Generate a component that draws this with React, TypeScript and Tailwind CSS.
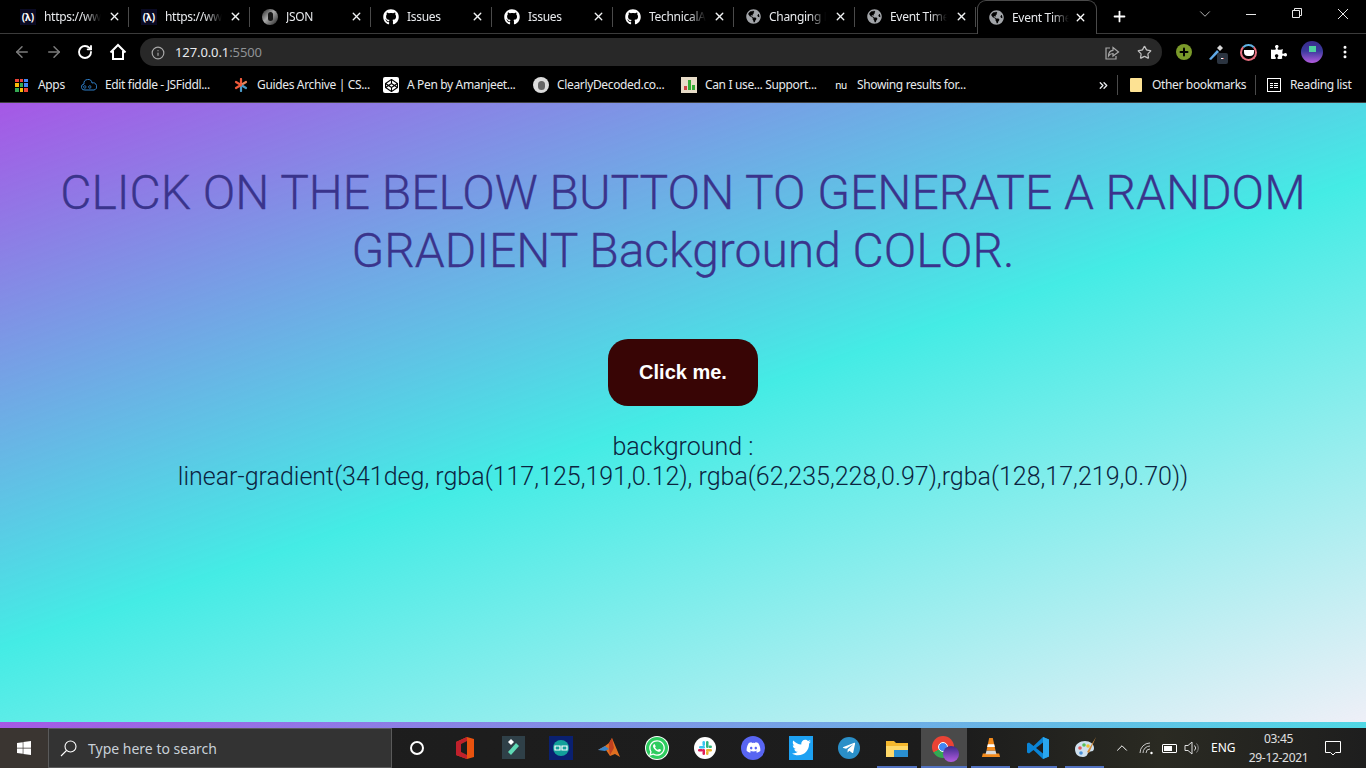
import { ArrowLeft, ArrowRight, ChevronDown, ChevronUp, Info, Plus, RotateCw, Star, X, MoreVertical, ChevronsRight } from 'lucide-react'
import { FaDiscord, FaGithub, FaGlobeAmericas, FaPuzzlePiece, FaTelegramPlane, FaTwitter, FaWhatsapp, FaWindows, FaCodepen } from 'react-icons/fa'
import type { ReactNode } from 'react'

const FreeCodeCamp = () => (
  <span className="flex h-4 w-4 items-center justify-center bg-[#0a0a23] text-[10px] font-bold text-white">
    <span className="leading-none">(λ)</span>
  </span>
)
const JsonLogo = () => (
  <span className="flex h-4 w-4 items-center justify-center rounded-full bg-[linear-gradient(135deg,#222,#aaa_45%,#222)]">
    <span className="h-[9px] w-[5px] rounded-full bg-[#161616]" />
  </span>
)
const Github = () => <FaGithub className="h-4 w-4 text-white" />
const Globe = () => <FaGlobeAmericas className="h-[15px] w-[15px] text-[#a2a5a9]" />

const tabs: { title: string; icon: ReactNode }[] = [
  { title: 'https://www.freecodecamp', icon: <FreeCodeCamp /> },
  { title: 'https://www.freecodecamp', icon: <FreeCodeCamp /> },
  { title: 'JSON', icon: <JsonLogo /> },
  { title: 'Issues', icon: <Github /> },
  { title: 'Issues', icon: <Github /> },
  { title: 'TechnicalAnalysis', icon: <Github /> },
  { title: 'Changing Background', icon: <Globe /> },
  { title: 'Event Timer', icon: <Globe /> },
]

function Tab({ title, icon }: { title: string; icon: ReactNode }) {
  return (
    <div className="flex h-[33px] w-[121px] shrink-0 items-center">
      <div className="flex h-5 w-full items-center border-r border-[#4a4a4a] pl-3 pr-[7px]">
        {icon}
        <span className="ml-2 w-[57px] overflow-hidden whitespace-nowrap pt-px text-[12px] tracking-[-0.3px] text-[#e8eaed] [mask-image:linear-gradient(90deg,#000_70%,transparent)]">
          {title}
        </span>
        <X className="ml-auto h-[13px] w-[13px] text-[#f1f3f4]" strokeWidth={2.5} />
      </div>
    </div>
  )
}

function Bookmark({ width, icon, label }: { width: string; icon: ReactNode; label: string }) {
  return (
    <div className={`flex shrink-0 items-center gap-2 ${width}`}>
      <span className="flex h-4 w-4 items-center justify-center">{icon}</span>
      <span className="whitespace-nowrap">{label}</span>
    </div>
  )
}

const AppsGrid = () => (
  <span className="grid h-[13px] w-[13px] grid-cols-3 gap-px">
    {['bg-[#ea4335]', 'bg-[#ea4335]', 'bg-[#4285f4]', 'bg-[#fbbc05]', 'bg-[#34a853]', 'bg-[#4285f4]', 'bg-[#34a853]', 'bg-[#fbbc05]', 'bg-[#ea4335]'].map((c, i) => (
      <span key={i} className={c} />
    ))}
  </span>
)

const Cell = ({ children, active, running, w = 'w-[48px]' }: { children: ReactNode; active?: boolean; running?: boolean; w?: string }) => (
  <div className={`relative flex h-10 shrink-0 items-center justify-center pb-px ${w} ${active ? 'bg-[#4a4a4a]' : ''}`}>
    {children}
    {running && <span className={`absolute bottom-0 h-[2px] bg-[#5272c0] ${active ? 'inset-x-0' : 'inset-x-[4px]'}`} />}
  </div>
)

export default function App() {
  return (
    <div className="flex h-screen w-full flex-col overflow-hidden bg-black font-['Noto_Sans',sans-serif]">
      {/* tab strip */}
      <div className="flex h-[34px] shrink-0 items-start border-b border-[#3b3b3b] pl-2">
        {tabs.map((tab, i) => (
          <Tab key={i} title={tab.title} icon={tab.icon} />
        ))}
        <div className="relative z-10 ml-px flex h-[34px] w-[120px] shrink-0 items-center rounded-t-[9px] border border-b-0 border-[#4a4a4a] bg-black pb-px pl-[11px] pr-[9px]">
          <Globe />
          <span className="ml-2 w-[57px] overflow-hidden whitespace-nowrap pt-px text-[12px] tracking-[-0.3px] text-[#e8eaed] [mask-image:linear-gradient(90deg,#000_70%,transparent)]">Event Timer</span>
          <X className="ml-auto h-[13px] w-[13px] text-white" strokeWidth={2.5} />
        </div>
        <div className="ml-[14px] flex h-[33px] items-center">
          <Plus className="h-[17px] w-[17px] text-white" strokeWidth={2.5} />
        </div>
        <div className="ml-auto flex h-[28px] items-center text-[#e8e8e8]">
          <ChevronDown className="h-[18px] w-[46px]" strokeWidth={1} />
          <svg viewBox="0 0 46 14" className="h-[14px] w-[46px]" fill="none" stroke="currentColor"><path d="M18 7.500h10" /></svg>
          <svg viewBox="0 0 46 14" className="h-[14px] w-[46px]" fill="none" stroke="currentColor"><path d="M18.500 3.500h7v7h-7zM20.500 3.500v-2h7v7h-2" /></svg>
          <svg viewBox="0 0 46 14" className="h-[14px] w-[46px]" fill="none" stroke="currentColor"><path d="M18 2l10 10M28 2 18 12" /></svg>
        </div>
      </div>

      {/* toolbar */}
      <div className="flex h-[36px] shrink-0 items-center text-white">
        <ArrowLeft className="ml-[13px] h-[18px] w-[18px] text-[#7c7c7c]" strokeWidth={2} />
        <ArrowRight className="ml-[14px] h-[18px] w-[18px] text-[#7c7c7c]" strokeWidth={2} />
        <RotateCw className="ml-[14px] h-[16px] w-[16px] text-white" strokeWidth={2.8} />
        <svg viewBox="0 0 18 18" className="ml-[16px] h-[18px] w-[18px]" fill="none" stroke="#fff" strokeWidth="2"><path d="M1.500 9.500 9 2l7.500 7.500M4 8v8h10V8" /></svg>
        <div className="ml-[13px] flex h-[28px] w-[1022px] items-center rounded-full bg-[#282828] pl-[11px] pr-[9px] pt-px">
          <Info className="h-[14px] w-[14px] text-[#a8a8a8]" />
          <span className="ml-[10px] text-[13px] tracking-[-0.1px] text-[#e8eaed]">
            127.0.0.1<span className="text-[#8f9295]">:5500</span>
          </span>
          <svg viewBox="0 0 16 16" className="ml-auto h-4 w-4" fill="none" stroke="#a8a8a8" strokeWidth="1.200"><path d="M6 3H2v11h10v-3" /><path d="M9 2.500 14.500 7 9 11V8.500C7 8.500 5.500 9.500 4.500 11c0-3.500 2-5.500 4.500-5.700z" /></svg>
          <Star className="ml-[17px] mr-[1px] h-[15px] w-[15px] text-[#c0c0c0]" strokeWidth={2} />
        </div>
        <span className="ml-[14px] flex h-4 w-4 items-center justify-center rounded-full bg-[#7a9a2a]">
          <Plus className="h-3 w-3 text-black" strokeWidth={4} />
        </span>
        <span className="relative ml-[16px] flex h-4 w-4 items-center justify-center">
          <svg viewBox="0 0 16 16" className="h-4 w-4"><path d="M1 15 9 6l2 2-8 8z" fill="#5fa8e6" /><path d="M9 4l3-3 3 3-3 3z" fill="#d8d8d8" /></svg>
          <span className="absolute -bottom-[4px] -right-[4px] flex h-[11px] w-[11px] items-center justify-center rounded-[2px] bg-[#2b3440]">
            <span className="h-px w-[3px] bg-[linear-gradient(90deg,#fff_50%,#e05a5a_50%)]" />
          </span>
        </span>
        <span className="ml-[16px] flex h-[17px] w-[17px] items-center justify-center rounded-full border-2 border-[#e87080] border-t-[#5fb4e6] bg-black">
          <span className="h-[7px] w-[10px] rounded-b-[4px] border-t border-black bg-white" />
        </span>
        <FaPuzzlePiece className="ml-[14px] h-4 w-4 text-white" />
        <span className="ml-[14px] flex h-[22px] w-[22px] items-start justify-center rounded-full bg-[linear-gradient(180deg,#3a2a8c,#3a3a9c_45%,#b45ce0)] pt-[5px]">
          <span className="h-[6px] w-[7px] bg-[#4fd0a0]" />
        </span>
        <MoreVertical className="ml-[14px] h-[16px] w-[16px] text-white" strokeWidth={2.5} />
      </div>

      {/* bookmarks bar */}
      <div className="flex h-[33px] shrink-0 items-center border-b border-[#3f3f3f] pb-[2px] pl-[15px] text-[12px] tracking-[-0.35px] text-[#e8eaed]">
        <div className="flex w-[66px] shrink-0 items-center gap-[10px]">
          <AppsGrid />
          <span>Apps</span>
        </div>
        <Bookmark width="w-[152px]" label="Edit fiddle - JSFiddl..." icon={<svg viewBox="0 0 16 12" className="h-3 w-4" fill="none" stroke="#2f7fc8" strokeWidth="1"><path d="M4 11a3 3 0 0 1-1-6 4 4 0 0 1 8-1 3.500 3.500 0 0 1 2 7z" /><path d="M5 8a1.200 1.200 0 1 1 0-.1zM10 8a1.200 1.200 0 1 1 0-.1z" /></svg>} />
        <Bookmark width="w-[150px]" label="Guides Archive | CS..." icon={<svg viewBox="0 0 14 14" className="h-[14px] w-[14px]" strokeWidth="2.200" strokeLinecap="round"><path d="M7 7V1" stroke="#ef5a3a" /><path d="M7 7l5-3" stroke="#e8845a" /><path d="M7 7l5 3" stroke="#4a9ac8" /><path d="M7 7v6" stroke="#4a9ac8" /><path d="M7 7l-5 3" stroke="#ef5a3a" /><path d="M7 7 2 4" stroke="#ef5a3a" /></svg>} />
        <Bookmark width="w-[150px]" label="A Pen by Amanjeet..." icon={<span className="flex h-4 w-4 items-center justify-center rounded-[2px] bg-white"><FaCodepen className="h-[13px] w-[13px] text-black" /></span>} />
        <Bookmark width="w-[148px]" label="ClearlyDecoded.co..." icon={<span className="flex h-4 w-4 items-center justify-center rounded-full bg-[#dcdcdc]"><span className="h-[9px] w-[7px] rounded-full bg-[#666]" /></span>} />
        <Bookmark width="w-[152px]" label="Can I use... Support..." icon={<span className="flex h-4 w-4 items-end justify-center gap-px bg-[#e8dcc8] pb-[3px]"><span className="h-[4px] w-[3px] bg-[#c44]" /><span className="h-[10px] w-[3px] bg-[#3a3]" /><span className="h-[5px] w-[3px] bg-[#3a3]" /></span>} />
        <Bookmark width="w-[264px]" label="Showing results for..." icon={<span className="text-[10px] leading-none text-white">nu</span>} />
        <ChevronsRight className="h-[13px] w-[13px] text-[#e8eaed]" strokeWidth={2.5} />
        <span className="ml-[7px] h-5 w-px bg-[#4a4a4a]" />
        <span className="ml-[12px] block h-[14px] w-[12px] rounded-[1px] bg-[#fde293]" />
        <span className="ml-[10px] w-[103px] whitespace-nowrap">Other bookmarks</span>
        <span className="h-5 w-px bg-[#4a4a4a]" />
        <span className="ml-[11px] grid h-[14px] w-[14px] grid-cols-[3px_1fr] content-center gap-x-px gap-y-px border border-white p-[2px]">
          {[0, 1, 2, 3, 4, 5].map((n) => (
            <span key={n} className="h-px bg-white" />
          ))}
        </span>
        <span className="ml-[9px] whitespace-nowrap">Reading list</span>
      </div>

      {/* page */}
      <main className="flex min-h-0 flex-1 flex-col items-center bg-white bg-[linear-gradient(341deg,rgba(117,125,191,0.12),rgba(62,235,228,0.97),rgba(128,17,219,0.70))] bg-[length:100%_619px] font-['Roboto',sans-serif]">
        <h1 className="mt-[61px] w-full px-[60px] text-center text-[48px] font-light leading-[58px] text-[#3a348c] [-webkit-text-stroke:0.3px_#3a348c]">
          CLICK ON THE BELOW BUTTON TO GENERATE A RANDOM GRADIENT Background COLOR.
        </h1>
        <button className="mt-[59px] flex h-[67px] w-[150px] items-center justify-center rounded-[20px] bg-[#380505] pb-[2px] font-['Liberation_Sans',sans-serif] text-[20px] font-bold text-white">
          Click me.
        </button>
        <div className="mt-[26px] text-center text-[25px] font-light leading-[30px] text-[#0c2440]">
          <p>background :</p>
          <p>linear-gradient(341deg, rgba(117,125,191,0.12), rgba(62,235,228,0.97),rgba(128,17,219,0.70))</p>
        </div>
      </main>

      {/* taskbar */}
      <div className="flex h-10 shrink-0 items-center bg-[linear-gradient(90deg,#1e1e1e,#1c1c1c_70%,#2a2a22_85%,#1e1e1e)] text-white">
        <div className="flex h-10 w-12 shrink-0 items-center justify-center bg-[#3a3531]">
          <FaWindows className="h-4 w-4 text-white" />
        </div>
        <div className="flex h-10 w-[344px] shrink-0 items-center border border-[#5a5a5a] bg-[#333333] pl-[11px] text-[14px] text-[#c8d0d8]">
          <svg viewBox="0 0 17 17" className="h-[17px] w-[17px]" fill="none" stroke="#fff" strokeWidth="1.100"><circle cx="10.500" cy="6.500" r="5.500" /><path d="M6.500 10.500 1 16" /></svg>
          <span className="ml-[11px]">Type here to search</span>
        </div>
        <Cell w="w-[49px]"><span className="h-[14px] w-[14px] rounded-full border-2 border-white" /></Cell>
        <Cell><svg viewBox="0 0 18 22" className="h-[22px] w-[18px]"><path d="M0 5 11 0l7 2v18l-7 2-11-4z" fill="#e8520e" /><path d="M0 5 11 0v4L5 7v8l6 3v4L0 18z" fill="#c0202c" /><path d="M5 7l6-3v14l-6-3z" fill="#1c1c1c" /></svg></Cell>
        <Cell><span className="relative flex h-[23px] w-[23px] items-center justify-center bg-[#2f4048]"><svg viewBox="0 0 23 23" className="h-[23px] w-[23px]"><path d="M6 6l3-3 3 3-3 3z" fill="#fff" /><path d="M14 7l3 3-8 9-3-3z" fill="#5fd9b5" /></svg></span></Cell>
        <Cell><span className="flex h-6 w-6 items-center justify-center bg-[#0a2070]"><svg viewBox="0 0 16 16" className="h-4 w-4"><circle cx="8" cy="8" r="8" fill="#12a09a" /><path d="M2 6h5v4H2zM9 6h5v4H9z" fill="none" stroke="#fff" strokeWidth="1.200" /></svg></span></Cell>
        <Cell><svg viewBox="0 0 24 22" className="h-[22px] w-6"><path d="M1 13l7-4 4-3 3-5 8 19-5-3-5 2-4-6z" fill="#e07020" /><path d="M1 13l7-4 4 3-4 2z" fill="#3a85c8" /><path d="M12 6l3-5 2 10-4 7-1-6z" fill="#c04020" /></svg></Cell>
        <Cell><span className="flex h-[22px] w-[22px] items-center justify-center rounded-full bg-[#2ecc5f] ring-1 ring-white"><FaWhatsapp className="h-[18px] w-[18px] text-white" /></span></Cell>
        <Cell><svg viewBox="0 0 22 22" className="h-[22px] w-[22px]"><circle cx="11" cy="11" r="11" fill="#fff" /><rect x="5" y="9" width="6" height="2.500" rx="1.200" fill="#36c5f0" /><rect x="8.500" y="4" width="2.500" height="5" rx="1.200" fill="#36c5f0" /><rect x="12" y="4" width="2.500" height="7" rx="1.200" fill="#2eb67d" /><rect x="14.500" y="8.500" width="3.500" height="2.500" rx="1.200" fill="#2eb67d" /><rect x="12" y="12" width="6" height="2.500" rx="1.200" fill="#ecb22e" /><rect x="12" y="14" width="2.500" height="4" rx="1.200" fill="#ecb22e" /><rect x="8.500" y="12" width="2.500" height="6" rx="1.200" fill="#e01e5a" /><rect x="4" y="12" width="5" height="2.500" rx="1.200" fill="#e01e5a" /></svg></Cell>
        <Cell><span className="flex h-6 w-6 items-center justify-center rounded-full bg-[#5865f2]"><FaDiscord className="h-[15px] w-[15px] text-white" /></span></Cell>
        <Cell><span className="flex h-6 w-6 items-center justify-center bg-[#1da1f2]"><FaTwitter className="h-[19px] w-[19px] text-white" /></span></Cell>
        <Cell><span className="flex h-[22px] w-[22px] items-center justify-center rounded-full bg-[#2a8fc8]"><FaTelegramPlane className="h-[14px] w-[14px] text-white" /></span></Cell>
        <Cell running><svg viewBox="0 0 24 20" className="h-5 w-6"><path d="M1 3h8l2 2h12v14H1z" fill="#f5b82e" /><path d="M1 8h22v11H1z" fill="#ffd969" /><rect x="9" y="12" width="14" height="7" fill="#2a8fd0" /></svg></Cell>
        <Cell active running w="w-[46px]">
          <span className="relative block h-[24px] w-[24px]">
            <span className="block h-[22px] w-[22px] rounded-full bg-[conic-gradient(#ea4335_0_120deg,#34a853_120deg_240deg,#ea4335_240deg_300deg,#ea4335_300deg_360deg)]" />
            <span className="absolute left-[6px] top-[6px] h-[10px] w-[10px] rounded-full border border-white bg-[#4285f4]" />
            <span className="absolute bottom-[-2px] right-[-3px] h-4 w-4 rounded-full bg-[linear-gradient(180deg,#3a2a8c,#b45ce0)]" />
          </span>
        </Cell>
        <Cell running w="w-[47px]"><svg viewBox="0 0 22 24" className="h-6 w-[20px]"><path d="M9 1h4l3 14H6z" fill="#f28a1c" /><path d="M7.500 8h7l.8 3H6.700z" fill="#fff" /><path d="M2 18h18l1 4H1z" fill="#f28a1c" /><path d="M6 15h10l1 4H5z" fill="#d8d8d8" /></svg></Cell>
        <Cell running w="w-[47px]"><svg viewBox="0 0 24 24" className="h-6 w-6"><path d="M17 1 7.500 10 3 6.500 1 7.500v9l2 1L7.500 14l9.500 9 6-2.500V3.500z" fill="#0a84d6" /><path d="M17 6.500v11L10 12z" fill="#1c1c1c" /><path d="M17 1l6 2.500v17L17 23z" fill="#2aa6ee" /></svg></Cell>
        <Cell running w="w-[47px]"><svg viewBox="0 0 24 24" className="h-6 w-6"><path d="M2 13c0-5 5-8 10-8s9 3 9 7-3 3-5 4-1 5-6 5-8-3-8-8z" fill="#cfe0ee" /><circle cx="7" cy="12" r="1.800" fill="#e05a5a" /><circle cx="11" cy="9" r="1.800" fill="#5ac05a" /><circle cx="15" cy="10" r="1.800" fill="#f0c030" /><circle cx="8" cy="17" r="1.800" fill="#4a90d8" /><path d="M23 1 14 16l2 1z" fill="#d08a3a" /></svg></Cell>

        <ChevronUp className="ml-[5px] h-[18px] w-[18px]" strokeWidth={1.3} />
        <svg viewBox="0 0 15 14" className="ml-[8px] h-[14px] w-[15px]" fill="none" stroke="#c8c8c8" strokeWidth="1"><path d="M1 12a10 10 0 0 1 10-10M4 12a7 7 0 0 1 7-7M7 12a4 4 0 0 1 4-4" /><circle cx="12.500" cy="12" r="1.200" fill="#fff" stroke="none" /></svg>
        <span className="ml-[8px] flex h-[9px] w-[15px] items-center rounded-[1px] border border-white p-px"><span className="h-full w-[8px] bg-white" /></span>
        <svg viewBox="0 0 17 16" className="ml-[7px] h-4 w-[17px]" fill="none" stroke="#e0e0e0" strokeWidth="1"><path d="M1 5.500h3L8 2v12l-4-3.500H1z" /><path d="M10.500 5.500a3.500 3.500 0 0 1 0 5" /><path d="M12.500 3.500a6.500 6.500 0 0 1 0 9" stroke="#888" /></svg>
        <span className="ml-[10px] text-[12px]">ENG</span>
        <div className="ml-[14px] flex w-[58px] flex-col items-center text-[12px] leading-[19px] tracking-[-0.3px] text-[#e0e0e0]">
          <span>03:45</span>
          <span className="whitespace-nowrap">29-12-2021</span>
        </div>
        <svg viewBox="0 0 16 16" className="ml-[17px] h-4 w-4" fill="none" stroke="#fff" strokeWidth="1"><path d="M.5 1.500h15v11h-5l-2.500 2.500-2.500-2.500h-5z" /></svg>
      </div>
    </div>
  )
}
